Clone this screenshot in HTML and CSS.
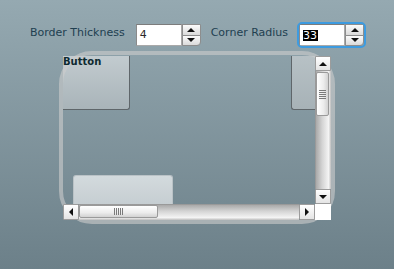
FILE: index.html
```html
<!DOCTYPE html>
<html>
<head>
<meta charset="utf-8">
<link rel="stylesheet" href="styles.css">
</head>
<body>
<div class="toolbar">
  <span class="label">Border Thickness</span>
  <div class="spin">
    <div class="box"><span class="val">4</span></div>
    <div class="btns">
      <div class="sbtn up"><i class="tri tri-up"></i></div>
      <div class="sbtn down"><i class="tri tri-down"></i></div>
    </div>
  </div>
  <span class="label label-2">Corner Radius</span>
  <div class="spin focused">
    <div class="box"><span class="val sel">33</span></div>
    <div class="btns">
      <div class="sbtn up"><i class="tri tri-up"></i></div>
      <div class="sbtn down"><i class="tri tri-down"></i></div>
    </div>
  </div>
</div>

<div class="frame">
  <div class="grid">
    <div class="viewport">
      <div class="top-row">
        <div class="btn btn-tl"><span class="btn-text">Button</span></div>
        <div class="btn btn-tr"></div>
      </div>
      <div class="btn btn-bl"></div>
    </div>
    <div class="vscroll">
      <div class="arrow-btn v-btn"><i class="tri tri-up"></i></div>
      <div class="vtrack">
        <div class="vthumb"><span class="grip-h"></span><span class="grip-h"></span><span class="grip-h"></span><span class="grip-h"></span><span class="grip-h"></span></div>
      </div>
      <div class="arrow-btn v-btn"><i class="tri tri-down"></i></div>
    </div>
    <div class="hscroll">
      <div class="arrow-btn h-btn"><i class="tri tri-left"></i></div>
      <div class="htrack">
        <div class="hthumb"><span class="grip-v"></span><span class="grip-v"></span><span class="grip-v"></span><span class="grip-v"></span><span class="grip-v"></span></div>
      </div>
      <div class="arrow-btn h-btn"><i class="tri tri-right"></i></div>
    </div>
    <div class="corner"></div>
  </div>
</div>
</body>
</html>
```
FILE: styles.css
```css
html, body {
  margin: 0;
  height: 100%;
}
body {
  background: linear-gradient(#95a9b1, #6c8089);
  font-family: "DejaVu Sans", "Noto Sans", sans-serif;
  overflow: hidden;
}

/* ---------- toolbar ---------- */
.toolbar {
  display: flex;
  justify-content: center;
  padding-top: 24px;
  height: 22px;
}
.label {
  font-size: 11px;
  line-height: 18px;
  color: #213f50;
  margin-right: 11px;
  white-space: nowrap;
}
.label-2 {
  margin-left: 10px;
}
.spin {
  display: flex;
  height: 22px;
  border-radius: 3px;
}
.spin.focused {
  outline: 2px solid #3d9be0;
  outline-offset: 0;
}
.box {
  width: 46px;
  box-sizing: border-box;
  background: #fff;
  border: 1px solid #a9a9a9;
  border-top-color: #7c7c7c;
  border-left-color: #8a8a8a;
  display: flex;
  align-items: center;
  padding-left: 3px;
}
.val {
  font-size: 11px;
  line-height: 20px;
  color: #2a2a2a;
}
.val.sel {
  display: inline-block;
  background: #000;
  color: #fff;
  line-height: 11px;
  height: 11px;
  padding: 0 1px 0 0;
}
.btns {
  width: 19px;
  display: flex;
  flex-direction: column;
}
.sbtn {
  flex: 1;
  box-sizing: border-box;
  border: 1px solid #8d8d8d;
  background: linear-gradient(#fbfbfb, #dadada);
  display: flex;
  align-items: center;
  justify-content: center;
}
.sbtn.up {
  border-bottom: none;
  border-top-right-radius: 2px;
}
.sbtn.down {
  border-bottom-right-radius: 4px;
}

/* ---------- triangles ---------- */
.tri {
  width: 0;
  height: 0;
  display: block;
}
.tri-up {
  border-left: 4px solid transparent;
  border-right: 4px solid transparent;
  border-bottom: 4px solid #111;
}
.tri-down {
  border-left: 4px solid transparent;
  border-right: 4px solid transparent;
  border-top: 4px solid #111;
}
.tri-left {
  border-top: 4px solid transparent;
  border-bottom: 4px solid transparent;
  border-right: 4px solid #111;
}
.tri-right {
  border-top: 4px solid transparent;
  border-bottom: 4px solid transparent;
  border-left: 4px solid #111;
}

/* ---------- frame ---------- */
.frame {
  position: relative;
  width: 276px;
  height: 173px;
  box-sizing: border-box;
  padding: 4px;
  margin: 5px auto 0;
  border-radius: 33px;
}
.frame::after {
  content: "";
  position: absolute;
  inset: 0;
  border: 4px solid rgba(205, 205, 205, 0.6);
  border-radius: 33px;
  z-index: 1;
  pointer-events: none;
}
.grid {
  display: grid;
  grid-template-columns: 252px 16px;
  grid-template-rows: 148px 16px;
  padding-top: 1px;
  height: 165px;
  box-sizing: border-box;
}
.viewport {
  grid-column: 1;
  grid-row: 1;
  display: flex;
  flex-direction: column;
  justify-content: space-between;
  overflow: hidden;
}
.top-row {
  display: flex;
  justify-content: space-between;
  height: 54px;
}
.btn {
  box-sizing: border-box;
}
.btn-tl {
  width: 67px;
  background: linear-gradient(#c2cbcf, #a9b4b9);
  border-right: 1px solid #5f666a;
  border-bottom: 1px solid #5f666a;
  border-bottom-right-radius: 3px;
}
.btn-text {
  position: relative;
  z-index: 2;
  display: block;
  font-size: 10px;
  font-weight: bold;
  line-height: 10px;
  color: #0e2a30;
  padding-top: 1px;
}
.btn-tr {
  width: 24px;
  background: linear-gradient(#b7c1c5, #a7b2b7);
  border-left: 1px solid #5f666a;
  border-bottom: 1px solid #5f666a;
  border-bottom-left-radius: 3px;
}
.btn-bl {
  margin-left: 10px;
  width: 100px;
  height: 29px;
  background: linear-gradient(#d3dadd, #c6ced2);
  border: 1px solid #bac2c6;
  border-bottom: none;
  border-radius: 3px 3px 0 0;
}

/* ---------- scrollbars ---------- */
.vscroll, .hscroll, .corner {
  position: relative;
  z-index: 2;
}
.vscroll {
  grid-column: 2;
  grid-row: 1;
  display: flex;
  flex-direction: column;
}
.hscroll {
  grid-column: 1;
  grid-row: 2;
  display: flex;
}
.corner {
  grid-column: 2;
  grid-row: 2;
  background: #fff;
}
.arrow-btn {
  box-sizing: border-box;
  background: linear-gradient(#ffffff, #e4e4e4);
  border: 1px solid #9c9c9c;
  border-radius: 1px;
  display: flex;
  align-items: center;
  justify-content: center;
  flex: none;
}
.v-btn {
  width: 16px;
  height: 15px;
}
.h-btn {
  width: 16px;
  height: 16px;
}
.vtrack {
  flex: 1;
  background: linear-gradient(to right, #8e8e8e 0, #ababab 8%, #d4d4d4 45%, #f4f4f4 85%, #bdbdbd 100%);
  padding: 1px 2px 0 1px;
}
.vthumb {
  height: 44px;
  box-sizing: border-box;
  background: linear-gradient(to right, #ffffff, #ececec 60%, #d2d2d2);
  border: 1px solid #9a9a9a;
  border-radius: 2px;
  display: flex;
  flex-direction: column;
  align-items: center;
  justify-content: center;
  gap: 1px;
}
.grip-h {
  width: 7px;
  height: 1px;
  background: #7a7a7a;
}
.htrack {
  flex: 1;
  background: linear-gradient(#8e8e8e 0, #ababab 8%, #d4d4d4 45%, #f4f4f4 85%, #bdbdbd 100%);
  padding: 1px 1px 2px 0;
}
.hthumb {
  width: 79px;
  height: 13px;
  box-sizing: border-box;
  background: linear-gradient(#ffffff, #ececec 60%, #d2d2d2);
  border: 1px solid #9a9a9a;
  border-radius: 2px;
  display: flex;
  align-items: center;
  justify-content: center;
  gap: 1px;
}
.grip-v {
  width: 1px;
  height: 7px;
  background: #7a7a7a;
}
```
